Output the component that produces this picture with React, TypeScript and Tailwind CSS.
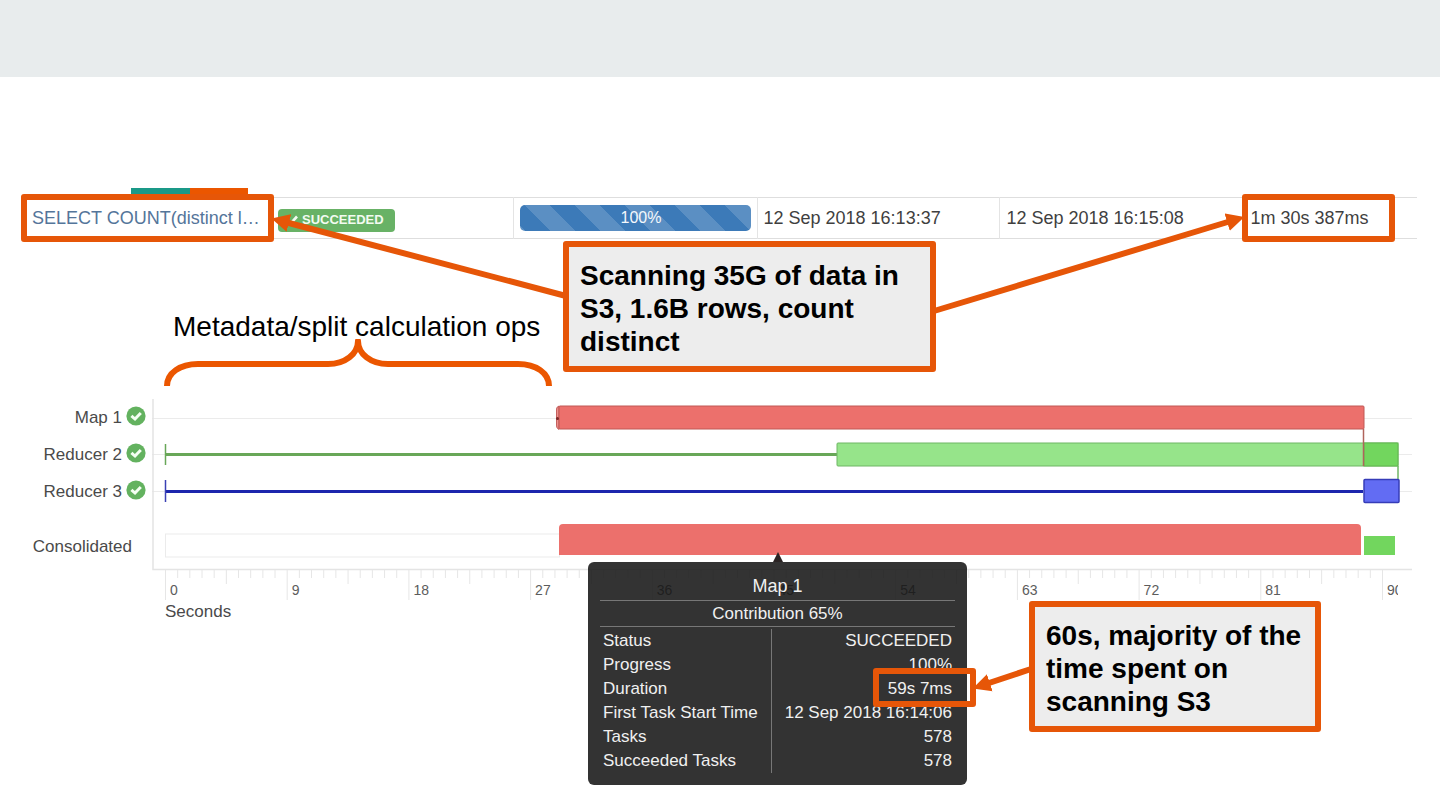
import type { ReactNode } from "react";

const cellText = "text-[18px] leading-6 text-[#3f3f3f]";

const vertices = [
  { name: "Map 1", done: true },
  { name: "Reducer 2", done: true },
  { name: "Reducer 3", done: true },
];

const details = [
  ["Status", "SUCCEEDED"],
  ["Progress", "100%"],
  ["Duration", "59s 7ms"],
  ["First Task Start Time", "12 Sep 2018 16:14:06"],
  ["Tasks", "578"],
  ["Succeeded Tasks", "578"],
];

const majorTicks = [0, 9, 18, 27, 36, 45, 54, 63, 72, 81, 90];
const minorTicks = Array.from({ length: 101 }, (_, i) => i);

function CheckBadge() {
  return (
    <svg viewBox="0 0 20 20" className="mb-1 h-5 w-5 shrink-0" aria-hidden="true">
      <circle cx="10" cy="10" r="9.6" fill="#63b25f" />
      <path d="M5.4 9.8 L9 13 L14.8 7" fill="none" stroke="#f4fff2" strokeWidth="3" />
    </svg>
  );
}

function QueryRow() {
  return (
    <div className="pr-[23px] pl-6">
      <table className="w-full table-fixed border-collapse">
        <colgroup>
          <col className="w-[248px]" />
          <col className="w-[241px]" />
          <col className="w-[244px]" />
          <col className="w-[242px]" />
          <col />
        </colgroup>
        <tbody>
          <tr className="h-[41px] border-y border-[#dedede]">
            <td className="pl-2">
              <a href="#query" className="text-[18px] leading-6 whitespace-nowrap text-[#54759a]">
                SELECT COUNT(distinct l…
              </a>
            </td>
            <td className="pt-1 pl-1.5">
              <span className="flex h-[23px] w-[117px] items-center gap-1 rounded-[4px] bg-[#68b266] pl-2 text-[13px] font-bold text-[#f3fbf1]">
                <svg viewBox="0 0 12 12" className="h-3 w-3 shrink-0" aria-hidden="true">
                  <path d="M1 6.5 L4.3 9.8 L11 2.5" fill="none" stroke="currentColor" strokeWidth="2.6" />
                </svg>
                SUCCEEDED
              </span>
            </td>
            <td className="border-l border-[#e4e4e4] px-1.5">
              <div
                role="progressbar"
                aria-valuenow={100}
                className="h-[26px] rounded-[5px] bg-[#3c7ab8] bg-[linear-gradient(45deg,rgba(255,255,255,0.16)_25%,transparent_25%,transparent_50%,rgba(255,255,255,0.16)_50%,rgba(255,255,255,0.16)_75%,transparent_75%)] bg-[length:50px_50px] bg-[position:5px_0px] pl-3 text-center text-[16px] leading-[26px] text-[#f4f8fc]"
              >
                100%
              </div>
            </td>
            <td className={`border-l border-[#e4e4e4] pl-1.5 ${cellText}`}>12 Sep 2018 16:13:37</td>
            <td className="border-l border-[#e4e4e4] p-0">
              <div className={`flex ${cellText}`}>
                <span className="w-[244px] pl-[7px]">12 Sep 2018 16:15:08</span>
                <span className="pl-[7px]">1m 30s 387ms</span>
              </div>
            </td>
          </tr>
        </tbody>
      </table>
    </div>
  );
}

function Plot() {
  return (
    <svg viewBox="152 399 1288 204" className="w-full" role="img" aria-label="Task timeline in seconds">
      <g stroke="#ebebeb" strokeWidth="1" fill="none">
        <path d="M152 418.5H1412M152 454.5H1412M152 491.5H1412" />
        <rect x="165.5" y="534" width="394" height="23" />
      </g>
      <path d="M153 399V569.5H1412" fill="none" stroke="#e4e4e4" strokeWidth="1.5" />

      <path d="M165.5 454.5H837" stroke="#68a758" strokeWidth="3" />
      <path d="M165.5 444V465" stroke="#68a758" strokeWidth="1.5" />
      <path d="M165.5 491.5H1363" stroke="#1c26ad" strokeWidth="3" />
      <path d="M165.5 480V502" stroke="#3a40b4" strokeWidth="1.5" />

      <path
        d="M559 406Q556 407 556.5 410V425Q556 428 559 429.5Z"
        fill="#ec8f8c"
        stroke="#c4605d"
        strokeWidth="1"
      />
      <rect x="559" y="406" width="805" height="23" rx="1" fill="#ec706c" stroke="#c05855" />
      <circle cx="557.5" cy="418.5" r="1.5" fill="#7b2727" />
      <rect x="837" y="443" width="561" height="23" rx="1" fill="#96e48a" stroke="#6fb664" />
      <rect x="1364" y="443" width="34" height="23" fill="#72d65e" stroke="#62b551" />
      <path d="M1363.5 429V466" stroke="#b0645c" strokeWidth="1.5" />
      <path d="M1398 466V480" stroke="#6fb664" strokeWidth="1.5" />
      <rect x="1364" y="479.5" width="35" height="23" rx="1" fill="#626cf3" stroke="#363cb8" strokeWidth="1.5" />

      <path d="M559 555V528Q559 524 563 524H1357Q1361 524 1361 528V555Z" fill="#ec706c" />
      <rect x="1364" y="536" width="31" height="19" fill="#72d65e" />

      <g stroke="#e6e6e6" strokeWidth="1">
        {minorTicks.map((i) => {
          const x = 165.5 + i * 12.17;
          const end = i % 10 === 0 ? 600 : i % 5 === 0 ? 584 : 578;
          return <line key={i} x1={x} x2={x} y1={570} y2={end} />;
        })}
      </g>
      <g fill="#5c5c5c" fontSize="14" fontFamily="Liberation Sans, Arial, sans-serif">
        {majorTicks.map((t, i) =>
          t === 90 ? (
            <svg key={t} x="1387" y="580" width="11" height="20">
              <text x="0" y="15">{t}</text>
            </svg>
          ) : (
            <text key={t} x={170 + i * 121.7} y={595}>{t}</text>
          ),
        )}
      </g>
    </svg>
  );
}

function Timeline() {
  return (
    <section className="flex text-[17px] leading-5 text-[#4a4a4a]">
      <ul className="w-[152px] shrink-0">
        {vertices.map((v) => (
          <li key={v.name} className="flex h-[37px] items-center justify-end gap-1 pr-1.5">
            {v.name}
            {v.done && <CheckBadge />}
          </li>
        ))}
        <li className="mt-[18px] flex h-[37px] items-center justify-end pr-5">Consolidated</li>
      </ul>
      <div className="min-w-0 grow">
        <Plot />
        <p className="pl-[13px] leading-[18px]">Seconds</p>
      </div>
    </section>
  );
}

function Tooltip() {
  return (
    <div
      role="tooltip"
      className="absolute top-[562px] left-[588px] w-[379px] rounded-[6px] bg-[#171717]/88 px-3 pt-[11px] pb-3 text-[17px] text-[#f0f0f0]"
    >
      <svg viewBox="0 0 10 10" className="absolute -top-2.5 left-[185px] h-2.5 w-2.5" aria-hidden="true">
        <path d="M5 0L10 10H0Z" fill="#2b2424" />
      </svg>
      <h2 className="h-7 border-b border-[#777] text-center text-[18px] leading-[27px]">Map 1</h2>
      <p className="h-[26px] border-b border-[#777] text-center leading-[25px]">Contribution 65%</p>
      <table className="mt-0.5 w-full border-collapse leading-6">
        <tbody>
          {details.map(([label, value]) => (
            <tr key={label}>
              <th scope="row" className="w-[171px] border-r border-[#777] pl-[3px] text-left font-normal whitespace-nowrap">
                {label}
              </th>
              <td className="pr-[3px] text-right whitespace-nowrap">{value}</td>
            </tr>
          ))}
        </tbody>
      </table>
    </div>
  );
}

function Callout({ className, children }: { className: string; children: ReactNode }) {
  return (
    <p
      className={`absolute rounded-[3px] border-6 border-[#e65608] bg-[#ededed] pt-3 pb-2 pl-[11px] text-[28px] leading-[33px] font-bold text-black ${className}`}
    >
      {children}
    </p>
  );
}

function Arrows() {
  return (
    <svg
      className="pointer-events-none absolute top-0 left-0 h-full w-full"
      stroke="#e65608"
      strokeWidth="6"
      fill="none"
      aria-hidden="true"
    >
      <defs>
        <marker
          id="head"
          markerUnits="userSpaceOnUse"
          markerWidth="20"
          markerHeight="20"
          refX="4"
          refY="10"
          orient="auto"
        >
          <path d="M0 1L18 10L0 19Z" fill="#e65608" stroke="none" />
        </marker>
      </defs>
      <path d="M566 296L285 222" markerEnd="url(#head)" />
      <path d="M934 311L1231 221" markerEnd="url(#head)" />
      <path d="M1031 669L986 684" markerEnd="url(#head)" />
    </svg>
  );
}

export default function App() {
  return (
    <main className="relative min-h-screen overflow-hidden bg-white font-['Liberation_Sans',Arial,sans-serif]">
      <header className="h-[77px] bg-[#e8eced]" />
      <div className="mt-[111px] mb-[3px] ml-[131px] flex h-1.5">
        <span className="w-[59px] bg-[#1a9988]" />
        <span className="w-[58px] bg-[#eb5600]" />
      </div>
      <QueryRow />
      <p className="mt-[72px] pl-[173px] text-[28px] leading-8 whitespace-nowrap text-black">
        Metadata/split calculation ops
      </p>
      <svg viewBox="0 0 390 48" className="-mt-1 mb-3 ml-[164px] h-12 w-[390px]" aria-hidden="true">
        <path
          d="M3 47C3 34 16 25 34 25H164C181 25 194 15 194 2C194 15 207 25 224 25H354C372 25 385 34 385 47"
          fill="none"
          stroke="#eb5600"
          strokeWidth="6"
          strokeLinejoin="round"
        />
      </svg>
      <Timeline />
      <Tooltip />
      <Arrows />
      <div className="absolute top-[194px] left-[21px] h-12 w-[253px] rounded-[3px] border-6 border-[#e65608]" />
      <div className="absolute top-[194px] left-[1242px] h-12 w-[153px] rounded-[3px] border-6 border-[#e65608]" />
      <div className="absolute top-[668px] left-[873px] h-[39px] w-[103px] rounded-[3px] border-6 border-[#e65608]" />
      <Callout className="top-[241px] left-[563px] w-[373px]">
        Scanning 35G of data in S3, 1.6B rows, count distinct
      </Callout>
      <Callout className="top-[601px] left-[1029px] w-[292px]">
        60s, majority of the time spent on scanning S3
      </Callout>
    </main>
  );
}
